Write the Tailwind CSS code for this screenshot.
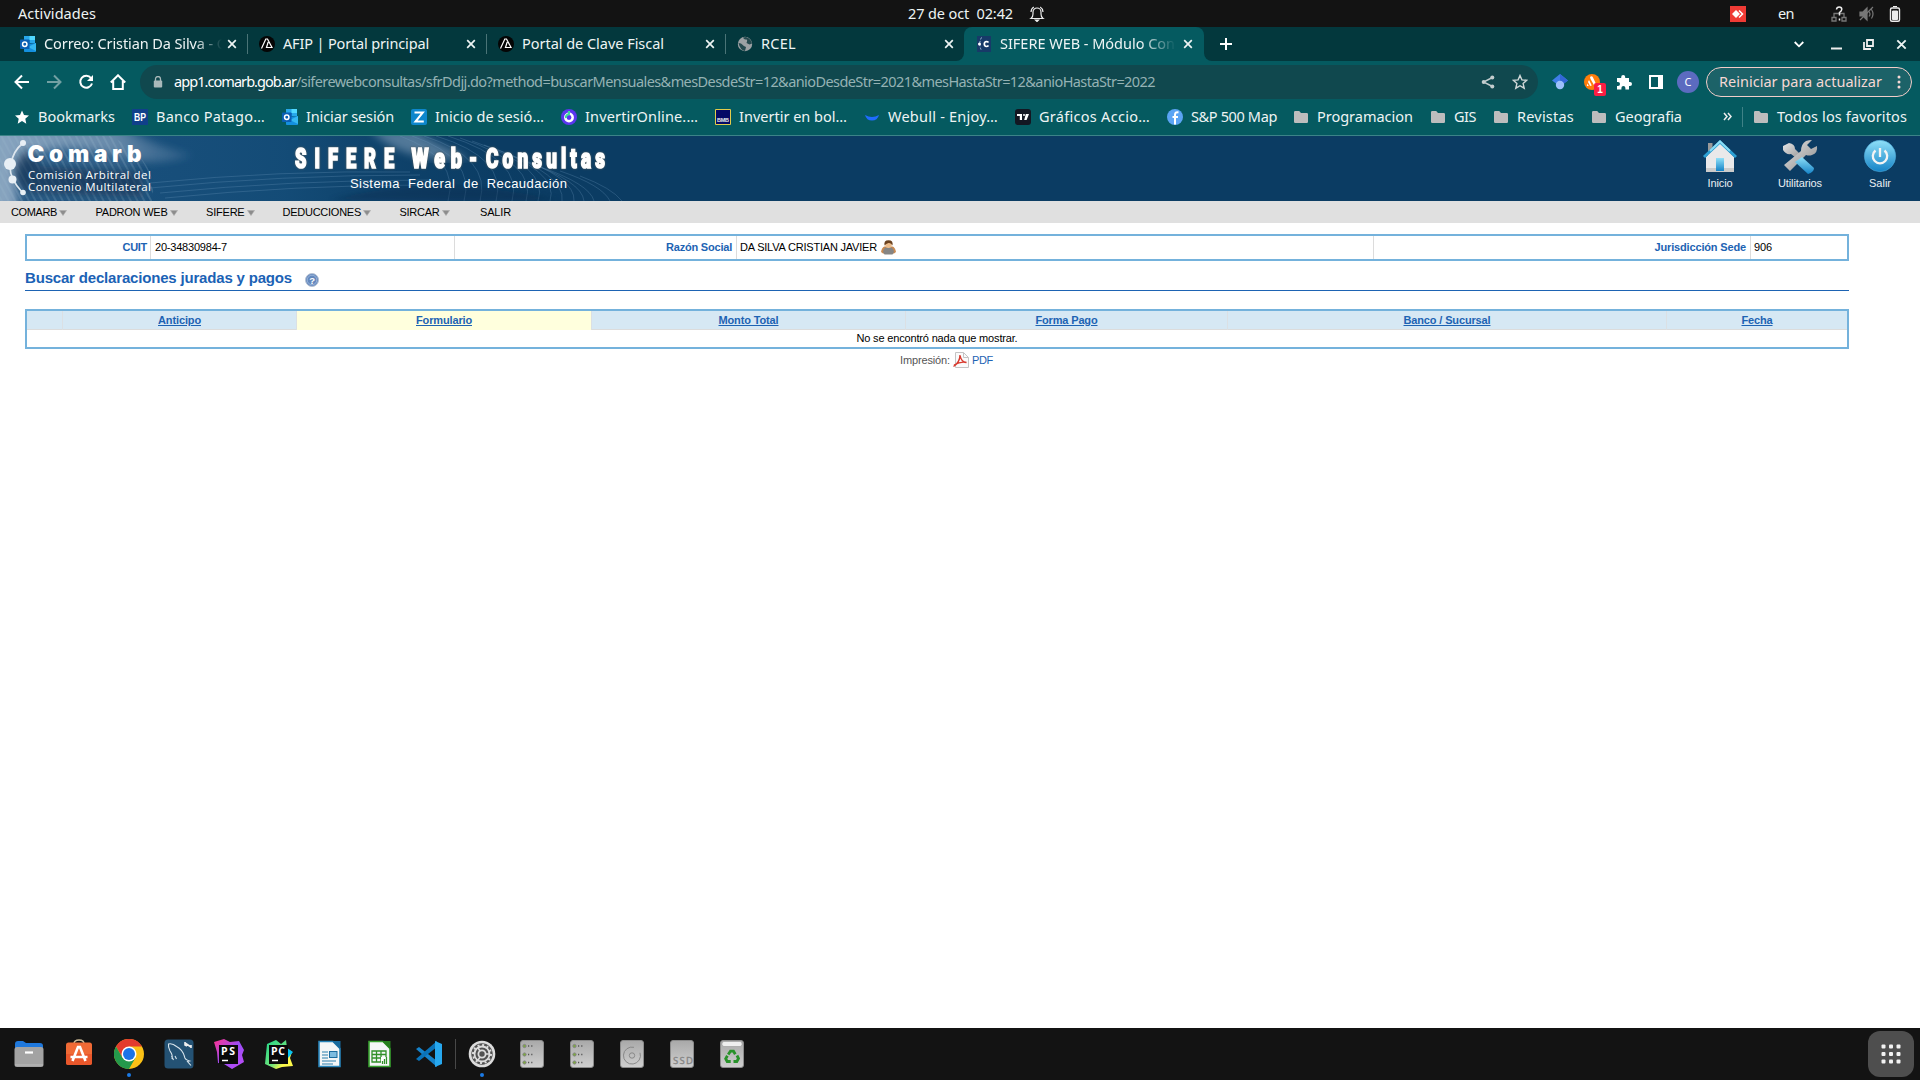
<!DOCTYPE html>
<html lang="es">
<head>
<meta charset="utf-8">
<title>SIFERE WEB - Módulo Consultas</title>
<script src="https://cdn.jsdelivr.net/npm/@tailwindcss/browser@4"></script>
</head>
<body class="w-[1920px] h-[1080px] overflow-hidden bg-white flex flex-col font-['Noto_Sans',sans-serif] text-[14.5px] text-[#eef4f4] whitespace-nowrap">

<svg class="hidden">
  <symbol id="outlook" viewBox="0 0 16 16"><path d="M4 0h11v7H4z" fill="#28a8ea"/><path d="M9.500 0H15v4H9.500z" fill="#50d9ff"/><path d="M4 4h5.500v4H4z" fill="#0364b8"/><path d="M4 8l12-1v8.200q0 .8-.8.800H4.800q-.8 0-.8-.8z" fill="#1490df"/><path d="M16 7v8L8 11z" fill="#35b8f1"/><rect y="3.500" width="9.500" height="9.500" rx=".8" fill="#0a5fb4"/><circle cx="4.750" cy="8.250" r="2.200" fill="none" stroke="#fff" stroke-width="1.500"/></symbol>
  <symbol id="afip" viewBox="0 0 16 16"><circle cx="8" cy="8" r="8" fill="#050505"/><path d="M2.500 12.500L6.800 3h1.700l4.500 8.500H7.500L9.200 6" fill="none" stroke="#fff" stroke-width="1.200"/></symbol>
  <symbol id="x" viewBox="0 0 10 10"><path d="M1.200 1.200l7.600 7.600M8.800 1.200L1.200 8.800" stroke="#eef4f4" stroke-width="1.700"/></symbol>
  <symbol id="folder" viewBox="0 0 16 16"><path d="M1 3.200Q1 2 2.200 2h4l1.800 2h5.800Q15 4 15 5.200v7.600q0 1.200-1.200 1.200H2.200Q1 14 1 12.800z" fill="#bdbdbd"/></symbol>
  <symbol id="down" viewBox="0 0 8 6"><path d="M.5.500h7L4 5.500z" fill="#8d8d8d" stroke="#aaa" stroke-width=".6"/></symbol>
  <symbol id="drive" viewBox="0 0 24 28"><rect x=".5" y=".5" width="23" height="27" rx="2.500" fill="url(#dg)" stroke="#8b8b8b"/></symbol>
  <symbol id="rack" viewBox="0 0 24 28"><use href="#drive"/><g fill="#7dab3c" stroke="#828282"><circle cx="4.500" cy="6" r="1.600"/><circle cx="4.500" cy="14.500" r="1.600"/><circle cx="4.500" cy="22.500" r="1.600"/></g><path d="M8 6h1.200m2 0h1.200M8 14.500h1.200m2 0h1.200M8 22.500h1.200m2 0h1.200" stroke="#555" stroke-width="1.400"/></symbol>
</svg>
<svg class="absolute w-0 h-0"><defs>
  <linearGradient id="dg" x2="0" y2="1"><stop stop-color="#a9a9a9"/><stop offset="1" stop-color="#cfcfcf"/></linearGradient>
  <linearGradient id="blue" x2="0" y2="1"><stop stop-color="#8fe0f8"/><stop offset="1" stop-color="#1583c7"/></linearGradient>
  <linearGradient id="steel" x2="1" y2="1"><stop stop-color="#e6e6e6"/><stop offset="1" stop-color="#8b8b8b"/></linearGradient>
  <linearGradient id="ps" x2="1" y2="1"><stop stop-color="#ff318c"/><stop offset=".5" stop-color="#9b4df5"/><stop offset="1" stop-color="#c04cf8"/></linearGradient>
  <linearGradient id="pc" x2="1" y2="1"><stop stop-color="#21d789"/><stop offset=".55" stop-color="#6de27c"/><stop offset=".75" stop-color="#fcf84a"/></linearGradient>
</defs></svg>

<!-- desktop top bar -->
<div class="h-[27px] shrink-0 bg-[#131313] flex items-center relative">
  <span class="ml-[18px]" data-w="78">Actividades</span>
  <span class="ml-[812px]" data-w="105">27 de oct&nbsp; 02:42</span>
  <svg class="ml-[16px] w-4 h-4 shrink-0" viewBox="0 0 16 16" fill="none" stroke="#eee" stroke-width="1.200"><path d="M2 12.500q2-1.500 2-4.500V6a4 4 0 0 1 8 0v2q0 3 2 4.500zM2 6q.2-3.500 2.800-5M14 6q-.2-3.500-2.800-5"/><path d="M6.500 14h3L8 15.500z" fill="#fff"/></svg>
  <svg class="ml-[685px] w-4 h-4 shrink-0" viewBox="0 0 16 16"><path d="M0 0h16v16H0z" fill="#ef3b35"/><path d="M6 4l4 4-4 4-4-4z" fill="#fff"/><path d="M9 4.500L12.500 8 9 11.500" fill="none" stroke="#fff" stroke-width="1.500"/></svg>
  <span class="ml-[32px]" data-w="16">en</span>
  <svg class="ml-[37px] w-4 h-4 shrink-0" viewBox="0 0 16 16" fill="none" stroke="#777" stroke-width="1.300"><path d="M3 11V7.500h10V11M1 11.500h4V15H1zM11 11.500h4V15h-4z"/><path d="M5.500 3.500q.3-2.500 2.700-2.500 2.600 0 2.600 2.300 0 1.500-2.300 3.200v3M8.500 12.500v2" stroke="#eee" stroke-width="1.500"/></svg>
  <svg class="ml-[12px] w-4 h-4 shrink-0" viewBox="0 0 16 16" stroke="#777" fill="none" stroke-width="1.200"><path d="M1 6h3l4-4v12l-4-4H1z" fill="#777"/><path d="M1 14L14 1M10 5.500q2 2.500 0 5M12.500 3.500q3 4.500 0 9"/></svg>
  <svg class="ml-[12px] w-4 h-4 shrink-0" viewBox="0 0 16 16"><rect x="3.500" y="2" width="9" height="13.300" rx="1.500" fill="none" stroke="#eee" stroke-width="1.400"/><path d="M6 .5h4M5.500 5h5v8.500h-5z" stroke="#eee" fill="#eee"/></svg>
</div>

<!-- tab strip -->
<div class="h-[34px] shrink-0 bg-[#03383d] flex items-center pl-2">
  <div class="w-[239px] h-full flex items-center pl-3 shrink-0 relative"><svg class="w-4 h-4 mr-2"><use href="#outlook"/></svg><div class="w-[178px] overflow-hidden mask-r-from-85%"><span data-w="184">Correo: Cristian Da Silva - O</span></div><svg class="w-[10px] h-[10px] ml-[5px]"><use href="#x"/></svg></div>
  <div class="w-[239px] h-full flex items-center pl-3 shrink-0"><i class="w-px h-5 bg-[#4a7477] -ml-3 mr-[11px]"></i><svg class="w-4 h-4 mr-2"><use href="#afip"/></svg><div class="w-[178px]"><span data-w="146">AFIP | Portal principal</span></div><svg class="w-[10px] h-[10px] ml-[5px]"><use href="#x"/></svg></div>
  <div class="w-[239px] h-full flex items-center pl-3 shrink-0"><i class="w-px h-5 bg-[#4a7477] -ml-3 mr-[11px]"></i><svg class="w-4 h-4 mr-2"><use href="#afip"/></svg><div class="w-[178px]"><span data-w="142">Portal de Clave Fiscal</span></div><svg class="w-[10px] h-[10px] ml-[5px]"><use href="#x"/></svg></div>
  <div class="w-[239px] h-full flex items-center pl-3 shrink-0"><i class="w-px h-5 bg-[#4a7477] -ml-3 mr-[11px]"></i><svg class="w-4 h-4 mr-2" viewBox="0 0 16 16"><circle cx="8" cy="8" r="7.200" fill="#9da1a4"/><path d="M1.500 7q3 .2 4 1.800T9 11l-1 4q-5-1-6.500-8zM6 1.500q1 2.500 3 2t.5 3.500l3 1.500 2.500-1Q14 2.500 9 1z" fill="#25494e"/></svg><div class="w-[178px]"><span data-w="35">RCEL</span></div><svg class="w-[10px] h-[10px] ml-[5px]"><use href="#x"/></svg></div>
  <div class="w-[240px] h-full flex items-center pl-3 shrink-0 bg-[#055a60] rounded-t-lg relative">
    <i class="absolute -left-2 bottom-0 w-2 h-2 bg-[#055a60]"><i class="block w-2 h-2 bg-[#03383d] rounded-br-lg"></i></i><i class="absolute -right-2 bottom-0 w-2 h-2 bg-[#055a60]"><i class="block w-2 h-2 bg-[#03383d] rounded-bl-lg"></i></i>
    <svg class="w-4 h-4 mr-2" viewBox="0 0 16 16"><path d="M1 0h14v16H1z" fill="#173a68"/><path d="M5.500 1.500Q2 8 5.500 14.500" fill="none" stroke="#a9c4dd" stroke-dasharray="2 1.500"/><circle cx="3.500" cy="8" r="1.500" fill="#fff"/><path d="M12.500 6.500q-.8-1-2-1Q8.300 5.700 8.300 8t2.200 2.500q1.200 0 2-1" fill="none" stroke="#fff" stroke-width="1.700"/></svg><div class="w-[176px] overflow-hidden mask-r-from-80%"><span data-w="175">SIFERE WEB - Módulo Con</span></div><svg class="w-[10px] h-[10px] ml-[7px]"><use href="#x"/></svg></div>
  <svg class="ml-[16px] w-3 h-3" viewBox="0 0 12 12"><path d="M6 0v12M0 6h12" stroke="#fff" stroke-width="2"/></svg>
  <svg class="ml-[562px] w-[10px] h-[7px]" viewBox="0 0 10 7"><path d="M.7 1L5 5.300 9.300 1" fill="none" stroke="#fff" stroke-width="1.800"/></svg>
  <svg class="ml-[27px] w-[11px] h-3" viewBox="0 0 11 12"><path d="M0 10.500h11" stroke="#eee" stroke-width="2"/></svg>
  <svg class="ml-[21px] w-[11px] h-[11px]" viewBox="0 0 11 11" fill="none" stroke="#eee" stroke-width="1.800"><path d="M4 1h6v6H4zM1 3v7h7"/></svg>
  <svg class="ml-[22px] w-[11px] h-[11px]"><use href="#x"/></svg>
</div>

<!-- toolbar -->
<div class="h-[42px] shrink-0 bg-[#055a60] flex items-center pl-[14px]">
  <svg class="w-4 h-4" viewBox="0 0 16 16" fill="none" stroke="#fff" stroke-width="2"><path d="M15 8H2M8 1.500L1.500 8 8 14.500"/></svg>
  <svg class="w-4 h-4 ml-4" viewBox="0 0 16 16" fill="none" stroke="#73a0a3" stroke-width="2"><path d="M1 8h13M8 1.500L14.500 8 8 14.500"/></svg>
  <svg class="w-4 h-4 ml-4" viewBox="0 0 16 16" fill="none" stroke="#fff" stroke-width="2"><path d="M13 4a6 6 0 1 0 1 5.500"/><path d="M15 1v6H9l2.500-2.500z" fill="#fff" stroke="none"/></svg>
  <svg class="w-4 h-4 ml-4" viewBox="0 0 16 16" fill="none" stroke="#fff" stroke-width="2"><path d="M.8 8.500L8 1.300l7.200 7.200M3.200 7v8h9.600V7"/></svg>
  <div class="ml-[14px] w-[1398px] h-[34px] shrink-0 rounded-full bg-[#10484e] flex items-center pl-[13px]">
    <svg class="w-[10px] h-3 mr-[11px] shrink-0" viewBox="0 0 10 12"><path d="M2.500 5V3a2.500 2.500 0 0 1 5 0v2" fill="none" stroke="#a9b9ba" stroke-width="1.300"/><rect x=".8" y="4.500" width="8.400" height="7" rx="1" fill="#a9b9ba"/></svg>
    <span class="text-white" data-w="122">app1.comarb.gob.ar</span><span class="text-[#95b2b4]" data-w="859">/siferewebconsultas/sfrDdjj.do?method=buscarMensuales&amp;mesDesdeStr=12&amp;anioDesdeStr=2021&amp;mesHastaStr=12&amp;anioHastaStr=2022</span>
    <svg class="ml-[326px] w-[14px] h-[14px] shrink-0" viewBox="0 0 14 14"><path d="M11.500 2.500L2.500 7l9 4.500" fill="none" stroke="#c3cdce" stroke-width="1.400"/><g fill="#c3cdce"><circle cx="11.300" cy="2.500" r="2"/><circle cx="2.700" cy="7" r="2"/><circle cx="11.300" cy="11.500" r="2"/></g></svg>
    <svg class="ml-[17px] w-4 h-4 shrink-0" viewBox="0 0 16 16"><path d="M8 1.500l1.900 4.400 4.800.4-3.600 3.200 1.100 4.700L8 11.700l-4.200 2.500 1.100-4.700-3.600-3.200 4.800-.4z" fill="none" stroke="#d0d8d8" stroke-width="1.400"/></svg>
  </div>
  <svg class="ml-[14px] w-4 h-4 shrink-0" viewBox="0 0 16 16"><path d="M8 0l8 6.500-8 6-8-6z" fill="#3f7ee8"/><path d="M8 0l8 6.500-8 6z" fill="#3367d6"/><circle cx="8" cy="11" r="4.200" fill="#9dc0fb"/></svg>
  <div class="relative ml-4 w-4 h-4 shrink-0"><svg class="w-4 h-4" viewBox="0 0 16 16"><circle cx="8" cy="8" r="8" fill="#ff7d0b"/><path d="M6 3q2-1.500 3 .5L12.500 11l-2 1L6.500 5M5 6l2.800 5.500-1.700.6L4 8zM3.500 9.500l1.200 2.600H2.800z" fill="#fff"/></svg><b class="absolute left-[10px] top-[9px] w-3 h-[13px] rounded-xs bg-[#fb1d43] text-white text-[10px] leading-[13px] text-center font-['Liberation_Sans',sans-serif]">1</b></div>
  <svg class="ml-4 w-4 h-4 shrink-0" viewBox="0 0 16 16"><path d="M1 4h4.200V3a2 2 0 0 1 4 0v1H13v4h1a2 2 0 0 1 0 4h-1v3.500H9.400V14a2 2 0 0 0-4 0v1.500H1V12h1a2 2 0 0 0 0-4H1z" fill="#fff"/></svg>
  <svg class="ml-[17px] w-[14px] h-[14px] shrink-0" viewBox="0 0 14 14"><path d="M1 1h12v12H1z" fill="none" stroke="#fff" stroke-width="2"/><path d="M9 1h4v12H9z" fill="#fff"/></svg>
  <div class="ml-[14px] w-[22px] h-[22px] shrink-0 rounded-full bg-[#5c6bc0] text-[11px] text-center leading-[22px] text-white">C</div>
  <div class="ml-[7px] w-[206px] h-[30px] shrink-0 rounded-full border border-[#f2cdc9] bg-[#1c6268] text-[#f6d8d5] flex items-center pl-3"><span data-w="163">Reiniciar para actualizar</span><svg class="ml-[15px] w-1 h-[14px] shrink-0" viewBox="0 0 4 14" fill="#f6d8d5"><circle cx="2" cy="2" r="1.500"/><circle cx="2" cy="7" r="1.500"/><circle cx="2" cy="12" r="1.500"/></svg></div>
</div>

<!-- bookmarks bar -->
<div class="h-[33px] pb-[5px] shrink-0 bg-[#055a60] border-b border-[#3c8387] flex items-center pl-[14px] gap-[17px]">
  <div class="flex items-center gap-2 shrink-0"><svg class="w-4 h-4" viewBox="0 0 16 16"><path d="M8 1.500l2 4.500 5 .5-3.700 3.300 1 4.900L8 12l-4.300 2.700 1-4.900L1 6.500 6 6z" fill="#fff"/></svg><span data-w="77">Bookmarks</span></div>
  <div class="flex items-center gap-2 shrink-0"><svg class="w-4 h-4" viewBox="0 0 16 16"><path d="M0 0h16v16H0z" fill="#10408a"/><text x="2" y="12" textLength="12" lengthAdjust="spacingAndGlyphs" font-family="Liberation Sans" font-weight="bold" font-size="11" fill="#fff">BP</text></svg><span data-w="109">Banco Patago…</span></div>
  <div class="flex items-center gap-2 shrink-0"><svg class="w-4 h-4"><use href="#outlook"/></svg><span data-w="88">Iniciar sesión</span></div>
  <div class="flex items-center gap-2 shrink-0"><svg class="w-4 h-4" viewBox="0 0 16 16"><rect width="16" height="16" rx="2" fill="#0d87cc"/><path d="M3.500 3.500h8.300L4.500 12.500h8.300" fill="none" stroke="#fff" stroke-width="2"/></svg><span data-w="109">Inicio de sesió…</span></div>
  <div class="flex items-center gap-2 shrink-0"><svg class="w-4 h-4" viewBox="0 0 16 16"><circle cx="8" cy="8" r="8" fill="#5b36ee"/><circle cx="8" cy="8.500" r="3.700" fill="none" stroke="#fff" stroke-width="2.500"/><path d="M8 2v3Q4.500 6 5 9" fill="none" stroke="#3ddb9a" stroke-width="2"/></svg><span data-w="113">InvertirOnline.…</span></div>
  <div class="flex items-center gap-2 shrink-0"><svg class="w-4 h-4" viewBox="0 0 16 16"><path d="M.5.500h15v15H.5z" fill="#050a66" stroke="#e3cc4b"/><text x="2" y="13" textLength="12" font-family="Liberation Sans" font-weight="bold" font-size="5.500" fill="#eee">BMB</text></svg><span data-w="108">Invertir en bol…</span></div>
  <div class="flex items-center gap-2 shrink-0"><svg class="w-4 h-4" viewBox="0 0 16 16"><path d="M1 6q7 4 14 0-1.500 5.500-7 5.500T1 6z" fill="#1f6cff"/></svg><span data-w="110">Webull - Enjoy…</span></div>
  <div class="flex items-center gap-2 shrink-0"><svg class="w-4 h-4" viewBox="0 0 16 16"><rect width="16" height="16" rx="3" fill="#131722"/><path d="M2 5h5v6H4.800V7H2zM10.800 5H14l-2.400 6H9.200z" fill="#fff"/><circle cx="9" cy="6" r="1" fill="#fff"/></svg><span data-w="111">Gráficos Accio…</span></div>
  <div class="flex items-center gap-2 shrink-0"><svg class="w-4 h-4" viewBox="0 0 16 16"><circle cx="8" cy="8" r="8" fill="#5ba4f4"/><path d="M11.500 3.500Q8 2.500 8 6v9.500M5.500 8H11" fill="none" stroke="#fff" stroke-width="2"/></svg><span data-w="86">S&amp;P 500 Map</span></div>
  <div class="flex items-center gap-2 shrink-0"><svg class="w-4 h-4 -ml-px"><use href="#folder"/></svg><span data-w="96">Programacion</span></div>
  <div class="flex items-center gap-2 shrink-0"><svg class="w-4 h-4"><use href="#folder"/></svg><span data-w="22">GIS</span></div>
  <div class="flex items-center gap-2 shrink-0"><svg class="w-4 h-4"><use href="#folder"/></svg><span data-w="57">Revistas</span></div>
  <div class="flex items-center gap-2 shrink-0"><svg class="w-4 h-4"><use href="#folder"/></svg><span data-w="67">Geografia</span></div>
  <svg class="ml-[24px] w-[9px] h-[9px] shrink-0" viewBox="0 0 9 9"><path d="M1 1l3 3.500L1 8M5 1l3 3.500L5 8" fill="none" stroke="#eee" stroke-width="1.500"/></svg>
  <i class="w-px h-5 bg-[#3f8287] -ml-[7px] -mr-[7px]"></i>
  <div class="flex items-center gap-2 shrink-0"><svg class="w-4 h-4"><use href="#folder"/></svg><span data-w="130">Todos los favoritos</span></div>
</div>

<!-- page -->
<main class="flex-1 bg-white text-black font-['Liberation_Sans',Arial,sans-serif] text-[11px]">
  <header class="h-[65px] bg-[#0b3c63] flex justify-between">
    <svg class="w-[720px] h-[65px]" viewBox="0 0 720 65">
      <defs>
        <linearGradient id="fl" x2="1" y2="0"><stop stop-color="#8aa6c1"/><stop offset=".6" stop-color="#7795b3" stop-opacity=".8"/><stop offset="1" stop-color="#4c7499" stop-opacity="0"/></linearGradient>
        <linearGradient id="mid" x2="1"><stop stop-color="#2a6496" stop-opacity=".5"/><stop offset=".5" stop-color="#17527f" stop-opacity=".7"/><stop offset="1" stop-color="#0b3c63" stop-opacity="0"/></linearGradient>
        <pattern id="lines" width="6" height="6" patternUnits="userSpaceOnUse" patternTransform="rotate(-28)"><path d="M1 0v6" stroke="#9db8cf" stroke-width="1.400" stroke-opacity=".32"/></pattern>
        <filter id="soft"><feGaussianBlur stdDeviation="4"/></filter>
        <filter id="shade"><feGaussianBlur stdDeviation="2.500"/></filter>
      </defs>
      <path d="M0 0h420q120 5 150 65H0z" fill="url(#mid)"/>
      <path d="M0 0h125q32 12 68 19-35 10-62 6 20 20 14 40H0z" fill="#6c8dae" opacity=".3" filter="url(#soft)"/>
      <path d="M-8-8h133q32 18 68 28-35 8-62 2Q60 3 30 20 8 34 20 73H-8z" fill="url(#fl)" filter="url(#soft)"/>
      <path d="M0 0h110q50 24 42 65H0z" fill="url(#lines)"/>
      <path d="M370-6q35 35 100 28Q430 5 415-6z" fill="#7f9db8" opacity=".6" filter="url(#soft)"/>
      <g fill="none" stroke="#6f9bc0" stroke-opacity=".28">
        <path d="M150 47q130-13 260-11M150 52q130-13 270-13M160 57q130-13 270-13M165 62q130-13 260-13"/>
        <path d="M400 0q60 22 48 65M412 0q64 22 52 65M424 0q68 22 56 65M436 0q72 22 60 65M448 0q76 24 64 65M460 2q78 26 66 63M472 5q78 26 66 60M484 9q76 26 66 56M496 13q70 26 66 52M510 19q66 22 64 46M524 25q58 20 60 40M538 30q52 18 56 35M560 35q42 14 50 30M580 40q32 12 42 25"/>
      </g>
      <path d="M330 64q100-28 230 0z" fill="#072c4d" opacity=".4" filter="url(#shade)"/>
      <path d="M28 12Q0 35 28 57l115 4V36L40 30z" fill="#0a2c4c" opacity=".6" filter="url(#soft)"/>
      <path d="M23 7Q13 15 11 28M10 31q0 12 12 25" fill="none" stroke="#dde6ee" stroke-width="1.700"/>
      <g fill="#e8eff5"><circle cx="23" cy="7" r="3"/><circle cx="10" cy="28" r="6"/><circle cx="12.500" cy="43.500" r="4"/><circle cx="23" cy="56.500" r="2.800"/></g>
      <g fill="#fff" font-family="Liberation Sans">
        <text x="27.500" y="26" font-family="Inter" font-size="22.500" font-weight="900" textLength="114">Comarb</text>
        <g font-family="Open Sans" font-size="11.500" font-weight="500"><text x="28" y="43" textLength="123">Comisión Arbitral del</text><text x="28" y="55" textLength="123">Convenio Multilateral</text></g>
        <g class="drop-shadow-[0_0_1px_#57605f]" font-family="Roboto" font-weight="900" font-size="27" stroke="#fff" stroke-width="1.600">
          <text transform="translate(295 32) scale(.68 1)" textLength="146">SIFERE</text>
          <text transform="translate(411.500 32) scale(.73 1)" textLength="69">Web</text>
          <text transform="translate(469 32) scale(.68 1)" textLength="12">-</text>
          <text transform="translate(486 32) scale(.7 1)" textLength="170">Consultas</text>
        </g>
        <text x="350" y="52" font-size="13" word-spacing="4" textLength="217">Sistema Federal de Recaudación</text>
      </g>
    </svg>
    <nav class="flex text-[#e9eef2] pt-[3px]">
      <div class="w-[80px] flex flex-col items-center"><svg class="w-9 h-9" viewBox="0 0 36 36"><path d="M6 4h4.500v12H6z" fill="#999"/><path d="M4 18L18 4l14 14v15H4z" fill="#e9e9ea"/><path d="M4 29h28v4H4z" fill="#cbcbcb"/><path d="M2 18L18 3l16 15" fill="none" stroke="#2ba0d4" stroke-width="3"/><path d="M8 12L18 2.500l10 9.500" fill="none" stroke="#8adcf5" stroke-width="2"/><path d="M14 19h8v13h-8z" fill="url(#blue)"/></svg><span class="leading-3 mt-[2px]" data-w="25">Inicio</span></div>
      <div class="w-[80px] flex flex-col items-center"><svg class="w-9 h-9" viewBox="0 0 36 36"><path d="M1 7l6-3q6 1 6 6l8 8-3 4-9-7q-5 1-8-4z" fill="url(#steel)"/><path d="M30 1l-5 5 4 4 6-3q1 7-5 9-3 1-6 0L8 32l-6-6 17-14q0-7 5-10 3-1 6-1z" fill="url(#steel)"/><path d="M13 23l7-5 12 11q0 4-6 6z" fill="url(#blue)"/></svg><span class="leading-3 mt-[2px]" data-w="44">Utilitarios</span></div>
      <div class="w-[80px] flex flex-col items-center"><svg class="w-9 h-9" viewBox="0 0 36 36"><circle cx="18" cy="17" r="15.700" fill="url(#blue)" stroke="#4ba8d6" stroke-width=".6"/><path d="M13.500 11.500a7.200 7.200 0 1 0 9 0M18 9v9" fill="none" stroke="#f4f4f4" stroke-width="2.300"/></svg><span class="leading-3 mt-[2px]" data-w="22">Salir</span></div>
    </nav>
  </header>
  <nav class="h-[22px] bg-[#e0e0e0] flex items-center pl-[11px]">
    <div class="w-[84.500px] flex items-center gap-[2px]"><span data-w="46">COMARB</span><svg class="w-[8px] h-[6px] mt-px"><use href="#down"/></svg></div>
    <div class="w-[110.500px] flex items-center gap-[2px]"><span data-w="72">PADRON WEB</span><svg class="w-[8px] h-[6px] mt-px"><use href="#down"/></svg></div>
    <div class="w-[76.500px] flex items-center gap-[2px]"><span data-w="38.500">SIFERE</span><svg class="w-[8px] h-[6px] mt-px"><use href="#down"/></svg></div>
    <div class="w-[117px] flex items-center gap-[2px]"><span data-w="78.500">DEDUCCIONES</span><svg class="w-[8px] h-[6px] mt-px"><use href="#down"/></svg></div>
    <div class="w-[80.500px] flex items-center gap-[2px]"><span data-w="40">SIRCAR</span><svg class="w-[8px] h-[6px] mt-px"><use href="#down"/></svg></div>
    <span data-w="31">SALIR</span>
  </nav>

  <div class="ml-[25px] w-[1824px]">
    <section class="mt-[11px] h-[27px] border-2 border-[#74b2dc] grid grid-cols-[124px_304px_282px_637px_377px_96px] leading-[22px]">
      <b class="border-r border-[#dcdcdc] pr-[3px] text-right text-[#1d63b3]"><span data-w="24.500">CUIT</span></b>
      <span class="border-r border-[#dcdcdc] pl-1"><span data-w="72">20-34830984-7</span></span>
      <b class="border-r border-[#dcdcdc] pr-[4px] text-right text-[#1d63b3]"><span data-w="66">Razón Social</span></b>
      <span class="border-r border-[#dcdcdc] pl-[3px] flex"><span data-w="137">DA SILVA CRISTIAN JAVIER</span><svg class="ml-1 mt-1 w-[15px] h-[15px]" viewBox="0 0 15 15"><path d="M0 12q1-5 3.500-5.500h8Q14 7 15 12l-2 1.500H2z" fill="#c98a52"/><path d="M2 12q.5-5 5.500-5t5.500 5l-1.500 2.500h-8z" fill="#858585"/><circle cx="7.500" cy="4.800" r="3.300" fill="#eebd8b"/><path d="M3.500 5.500Q2.500.3 7.500.3t4 5.200Q10 2.500 7.500 3T3.500 5.500z" fill="#6b4220"/></svg></span>
      <b class="border-r border-[#dcdcdc] pr-[4px] text-right text-[#1d63b3]"><span data-w="91.500">Jurisdicción Sede</span></b>
      <span class="pl-[3px]"><span data-w="18">906</span></span>
    </section>
    <div class="h-[30px] border-b border-[#1d63b3] flex items-center text-[#1b62b5]">
      <h1 class="font-bold text-[15px] mt-[6px]"><span data-w="267">Buscar declaraciones juradas y pagos</span></h1>
      <svg class="ml-[13px] mt-[8px] w-[14px] h-[14px]" viewBox="0 0 14 14"><circle cx="7" cy="7" r="6.500" fill="#6488bd" stroke="#b5c1d2"/><circle cx="7" cy="7" r="4.800" fill="none" stroke="#aac3e4" stroke-width=".7"/><text x="4.200" y="10.500" font-family="Liberation Sans" font-weight="bold" font-size="9.500" fill="#fff">?</text></svg>
    </div>
    <section class="mt-[18px] h-[40px] border-2 border-[#74b2dc]">
      <div class="h-[19px] border-b border-[#dcdcdc] bg-[#d6e8f4] grid grid-cols-[36px_234px_295px_314px_322px_439px_180px] text-center leading-[19px] font-bold text-[#1d63b3]">
        <span class="border-r border-[#dbe0e4]"></span>
        <a class="border-r border-[#dbe0e4]"><span class="underline" data-w="43">Anticipo</span></a>
        <a class="bg-[#ffffdd] border-r border-[#dbe0e4]"><span class="underline" data-w="56">Formulario</span></a>
        <a class="border-r border-[#dbe0e4]"><span class="underline" data-w="60">Monto Total</span></a>
        <a class="border-r border-[#dbe0e4]"><span class="underline" data-w="62">Forma Pago</span></a>
        <a class="border-r border-[#dbe0e4]"><span class="underline" data-w="87">Banco / Sucursal</span></a>
        <a><span class="underline" data-w="31">Fecha</span></a>
      </div>
      <p class="text-center leading-[17px]"><span data-w="161">No se encontró nada que mostrar.</span></p>
    </section>
    <div class="mt-[3px] pl-[875px] flex items-center text-[#555]"><span data-w="50">Impresión:</span><svg class="mx-[3px] w-4 h-4" viewBox="0 0 16 16"><path d="M2.500.500h8l5 5v10h-13z" fill="#fafafa" stroke="#c4c4c4"/><path d="M10.500.500v5h5" fill="none" stroke="#c4c4c4"/><path d="M.5 14.500Q7 10 7 3q1 7 6.500 7.500Q8 9 1 13" fill="none" stroke="#d83a2e" stroke-width="1.400"/></svg><span class="text-[#1d63b3]" data-w="21">PDF</span></div>
  </div>
</main>

<!-- dock -->
<footer class="h-[52px] shrink-0 bg-[#131313] flex items-center pl-[14px] gap-5 relative">
  <svg class="w-[30px] h-[30px]" viewBox="0 0 30 30"><path d="M1 5q0-3 3-3h5l3 2h14q3 0 3 3v6H1z" fill="#1f78dc"/><rect x=".5" y="8" width="29" height="20" rx="2.500" fill="#a3a3a3"/><path d="M1 26h28" stroke="#bcbcbc"/><path d="M11 13.500h8" stroke="#fff" stroke-width="2.200"/></svg>
  <svg class="w-[30px] h-[30px]" viewBox="0 0 30 30"><path d="M10 5q0-4 5-4t5 4" fill="none" stroke="#cdbb97" stroke-width="1.600"/><rect x="2" y="3.500" width="26" height="22.500" rx="2.500" fill="#f06a35"/><path d="M2 15h26v8.500q0 2.500-2.500 2.500h-21Q2 26 2 23.500z" fill="#e9572b"/><path d="M8.500 22L14 8h2l5.500 14M6.500 18h17" fill="none" stroke="#fff" stroke-width="2.600"/></svg>
  <svg class="w-[30px] h-[30px]" viewBox="0 0 30 30"><circle cx="15" cy="15" r="15" fill="#fbc116"/><path d="M2 7.500A15 15 0 0 1 28 7.500H15L8.500 18.700z" fill="#e33b2e"/><path d="M2 7.500A15 15 0 0 0 15 30l6.500-11.300H8.500z" fill="#24994b"/><circle cx="15" cy="15" r="7.500" fill="#fff"/><circle cx="15" cy="15" r="6" fill="#1a73e8"/></svg>
  <svg class="w-[30px] h-[30px]" viewBox="0 0 30 30"><rect x=".5" y=".5" width="29" height="29" rx="3.500" fill="#245274"/><path d="M8 20Q9 16 6 12 4 8 4.500 5q4-1 8 2.500 6 3 8 10 0 3 5 4.500l-2 .5 3.500 4M7.500 17l2 4M11 17l1.500 3" fill="none" stroke="#d9e5ed" stroke-width="1.100"/><path d="M21 4l6 4M21 3v3l2 1M27 9V6" stroke="#eee" stroke-width="1.600"/></svg>
  <svg class="w-[30px] h-[30px]" viewBox="0 0 30 30"><path d="M0 3L10 0l6 3 9-1 5 9-2 5 2 7-12 7-8-5-6-1L3 13z" fill="url(#ps)"/><path d="M5 6h19v19H5z" fill="#090909"/><text x="7" y="16" font-family="Open Sans" font-weight="bold" font-size="10.500" fill="#fff" textLength="14">PS</text><path d="M8 21.500h6" stroke="#fff" stroke-width="1.500"/></svg>
  <svg class="w-[30px] h-[30px]" viewBox="0 0 30 30"><path d="M3 5l9-4 5 4 5-4 1 8 5 4-2 6 3 8-11 1-6 2-11-5z" fill="url(#pc)"/><path d="M23 9l6 4-5 6z" fill="#07c3f2"/><path d="M5 6h19v19H5z" fill="#090909"/><text x="7" y="16" font-family="Open Sans" font-weight="bold" font-size="10.500" fill="#fff" textLength="14">PC</text><path d="M8 21.500h6" stroke="#fff" stroke-width="1.500"/></svg>
  <svg class="w-[30px] h-[30px]" viewBox="0 0 30 30"><path d="M5 2.500h14l7 7v18H5z" fill="#f4f6f7" stroke="#2783b8" stroke-width="1.600"/><path d="M18 2h8.500v8.500z" fill="#196a9d"/><path d="M8 13h6M8 16h6M8 19h6M8 22h14M8 25h11" stroke="#2a7eae" stroke-width="1.200"/><rect x="15.500" y="12.500" width="7.500" height="6" fill="#7dbbdf" stroke="#1c6b9e"/></svg>
  <svg class="w-[30px] h-[30px]" viewBox="0 0 30 30"><path d="M5 2.500h14l7 7v18H5z" fill="#f4f6f7" stroke="#37a02e" stroke-width="1.600"/><path d="M18 2h8.500v8.500z" fill="#257e1d"/><path d="M8 12h14v11H8zM8 15.500h14M8 19h14M12.500 12v11M17 12v11" fill="none" stroke="#319029" stroke-width="1.300"/><path d="M17 18h7v7h-7z" fill="#fff"/><path d="M18.500 25v-3m2 3v-5m2 5v-7" stroke="#319029" stroke-width="1.300"/></svg>
  <svg class="w-[30px] h-[30px]" viewBox="0 0 30 30"><path d="M2 10l3-2 18 14v6z" fill="#1683cb"/><path d="M2 20l3 2L23 8V2z" fill="#0a73b9"/><path d="M21 2l7 3v20l-7 3z" fill="#27a8ef"/></svg>
  <i class="w-px h-[30px] bg-[#484848] -ml-[9px] -mr-[8px]"></i>
  <svg class="w-[28px] h-[30px]" viewBox="1 0 28 30"><circle cx="15" cy="15" r="13.300" fill="#ddd"/><circle cx="15" cy="15" r="10.700" fill="#515151"/><circle cx="15" cy="15" r="7.500" fill="none" stroke="#ddd" stroke-width="1.800"/><circle cx="15" cy="15" r="9" fill="none" stroke="#ddd" stroke-width="2" stroke-dasharray="2 2.700"/><circle cx="15" cy="15" r="3.600" fill="none" stroke="#ddd" stroke-width="1.800"/><path d="M18.500 15H23M13 12l-2.500-4M13 18l-2.500 4" stroke="#ddd" stroke-width="1.500"/></svg>
  <svg class="w-6 h-7 ml-[4px]"><use href="#rack"/></svg>
  <svg class="w-6 h-7 ml-[6px]"><use href="#rack"/></svg>
  <svg class="w-6 h-7 ml-[6px]" viewBox="0 0 24 28"><use href="#drive" width="24" height="28"/><path d="M14 7.300a8.500 8.500 0 1 0 6 5.500" fill="none" stroke="#888"/><circle cx="12" cy="15.500" r="2.700" fill="none" stroke="#888"/></svg>
  <svg class="w-6 h-7 ml-[6px]" viewBox="0 0 24 28"><use href="#drive" width="24" height="28"/><text x="3" y="24" font-family="Noto Sans" font-size="9.500" fill="#858585" stroke="#858585" stroke-width=".3" textLength="20">SSD</text></svg>
  <svg class="w-6 h-7 ml-[6px]" viewBox="0 0 24 28"><use href="#drive" width="24" height="28"/><rect x="2" y="1.500" width="20" height="5" rx="2" fill="#efefef" stroke="#999" stroke-width=".6"/><g fill="none" stroke="#28922a" stroke-width="2.800"><path d="M8.200 14.500l2.300-3.300h3l1.800 3M17 15.500l1.500 3-1.700 3H13.500M10.700 21.500H7.200l-1.500-2.700 1.700-3"/></g></svg>
  <i class="absolute left-[127px] bottom-[3px] w-1 h-1 rounded-full bg-[#1b7ae6]"></i>
  <i class="absolute left-[480px] bottom-[3px] w-1 h-1 rounded-full bg-[#1b7ae6]"></i>
  <div class="ml-auto mr-[6px] w-[46px] h-[46px] rounded-xl bg-[#4e4e4e] grid place-items-center"><svg class="w-5 h-5" viewBox="0 0 20 20" fill="#f2f2f2"><rect x=".5" y=".5" width="4" height="4" rx="1"/><rect x="8" y=".5" width="4" height="4" rx="1"/><rect x="15.500" y=".5" width="4" height="4" rx="1"/><rect x=".5" y="8" width="4" height="4" rx="1"/><rect x="8" y="8" width="4" height="4" rx="1"/><rect x="15.500" y="8" width="4" height="4" rx="1"/><rect x=".5" y="15.500" width="4" height="4" rx="1"/><rect x="8" y="15.500" width="4" height="4" rx="1"/><rect x="15.500" y="15.500" width="4" height="4" rx="1"/></svg></div>
</footer>

<script>
// Tracks each label so that it fills the width given in data-w.
function track() {
  document.querySelectorAll('[data-w]').forEach(function (el) {
    el.style.display = 'inline-block';
    el.style.flexShrink = 0;
    el.style.width = 'max-content';
    el.style.letterSpacing = '0px';
    var want = parseFloat(el.dataset.w);
    var has = el.getBoundingClientRect().width;
    el.style.letterSpacing = ((want - has) / el.textContent.length) + 'px';
    el.style.width = want + 'px';
  });
}
track();
window.addEventListener('load', track);
document.fonts.ready.then(track);
</script>
</body>
</html>
